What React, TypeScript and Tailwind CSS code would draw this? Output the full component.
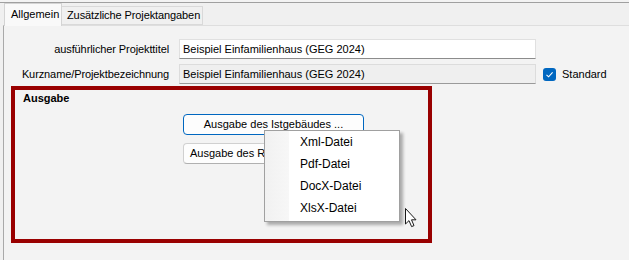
import React from "react";

function Cursor() {
  return (
    <svg width="14" height="22" viewBox="0 0 14 22" className="absolute left-[404px] top-[207px]">
      <path
        d="M1.5 1.5 L1.5 17 L5 13.6 L7.6 19.6 L10 18.6 L7.5 12.8 L12 12.8 Z"
        fill="#ffffff"
        stroke="#1a1a1a"
        strokeWidth="1"
        strokeLinejoin="miter"
      />
    </svg>
  );
}

export default function App() {
  const items = ["Xml-Datei", "Pdf-Datei", "DocX-Datei", "XlsX-Datei"];
  return (
    <div className="relative w-[629px] h-[260px] overflow-hidden bg-[#f0f0f0] font-['Liberation_Sans',Arial,sans-serif] text-[11px] text-black">
      <div className="h-[2px] bg-[#f3f3f3]" />
      <div className="h-px bg-[#a0a0a0]" />
      {/* tabs */}
      <div className="relative z-10 flex items-end h-[22px] pl-[4px] whitespace-nowrap">
        <div className="h-[23px] -mb-px w-[58px] bg-[#f9f9f9] border border-b-0 border-[#d4d4d4] pl-[6px] leading-[20px]">
          Allgemein
        </div>
        <div className="h-[19px] w-[141px] bg-[#f0f0f0] border border-l-0 border-[#d9d9d9] pl-[5px] leading-[17px] tracking-[-0.1px]">
          Zusätzliche Projektangaben
        </div>
      </div>
      {/* panel */}
      <div className="ml-[3px] h-[235px] border-l border-t border-l-[#a9a9a9] border-t-[#dedede] bg-[#f3f3f3] pt-[13px] whitespace-nowrap">
        <div className="flex items-center h-[20px]">
          <div className="w-[165px] text-right tracking-[-0.1px]">ausführlicher Projekttitel</div>
          <div className="ml-[10px] w-[357px] h-[20px] bg-white border border-[#e0e0e0] border-b-[#8c8c8c] pl-[3px] leading-[18px]">
            Beispiel Einfamilienhaus (GEG 2024)
          </div>
        </div>
        <div className="flex items-center h-[20px] mt-[5px]">
          <div className="w-[165px] text-right tracking-[-0.1px]">Kurzname/Projektbezeichnung</div>
          <div className="ml-[10px] w-[357px] h-[20px] bg-[#efefef] border border-[#dcdcdc] border-b-[#9a9a9a] pl-[3px] leading-[18px]">
            Beispiel Einfamilienhaus (GEG 2024)
          </div>
          <div className="ml-[7px] w-[13px] h-[13px] rounded-[3px] bg-[#0067c0] flex items-center justify-center">
            <svg width="9" height="9" viewBox="0 0 9 9">
              <path d="M1.5 4.8 L3.6 6.8 L7.6 2.4" fill="none" stroke="#ffffff" strokeWidth="1.1" />
            </svg>
          </div>
          <div className="ml-[6px]">Standard</div>
        </div>
        {/* Ausgabe group */}
        <div className="ml-[7px] mt-[2px] w-[421px] h-[157px] border-4 border-[#990000]">
          <div className="pl-[8px] font-bold leading-[16px]">Ausgabe</div>
          <div className="ml-[168px] mt-[8px] w-[181px] h-[21px] rounded-[4px] border border-[#0067c0] bg-[#fdfdfd] text-center leading-[19px]">
            Ausgabe des Istgebäudes ...
          </div>
          <div className="ml-[168px] mt-[8px] w-[181px] h-[21px] rounded-[4px] border border-[#d0d0d0] border-b-[#b0b0b0] bg-[#fdfdfd] leading-[19px] pl-[6px] overflow-hidden">
            Ausgabe des Referenzgebäudes ...
          </div>
        </div>
      </div>
      {/* context menu */}
      <div className="absolute left-[264px] top-[130px] w-[136px] h-[92px] bg-white border border-[#a0a0a0] shadow-[3px_3px_3px_rgba(0,0,0,0.3)] flex text-[12px]">
        <div className="w-[24px] h-full bg-gradient-to-r from-[#f1f1f1] to-[#f7f7f7]" />
        <div className="flex flex-col">
          {items.map((t) => (
            <div key={t} className="h-[22px] leading-[22px] pl-[11px]">
              {t}
            </div>
          ))}
        </div>
      </div>
      <Cursor />
    </div>
  );
}
